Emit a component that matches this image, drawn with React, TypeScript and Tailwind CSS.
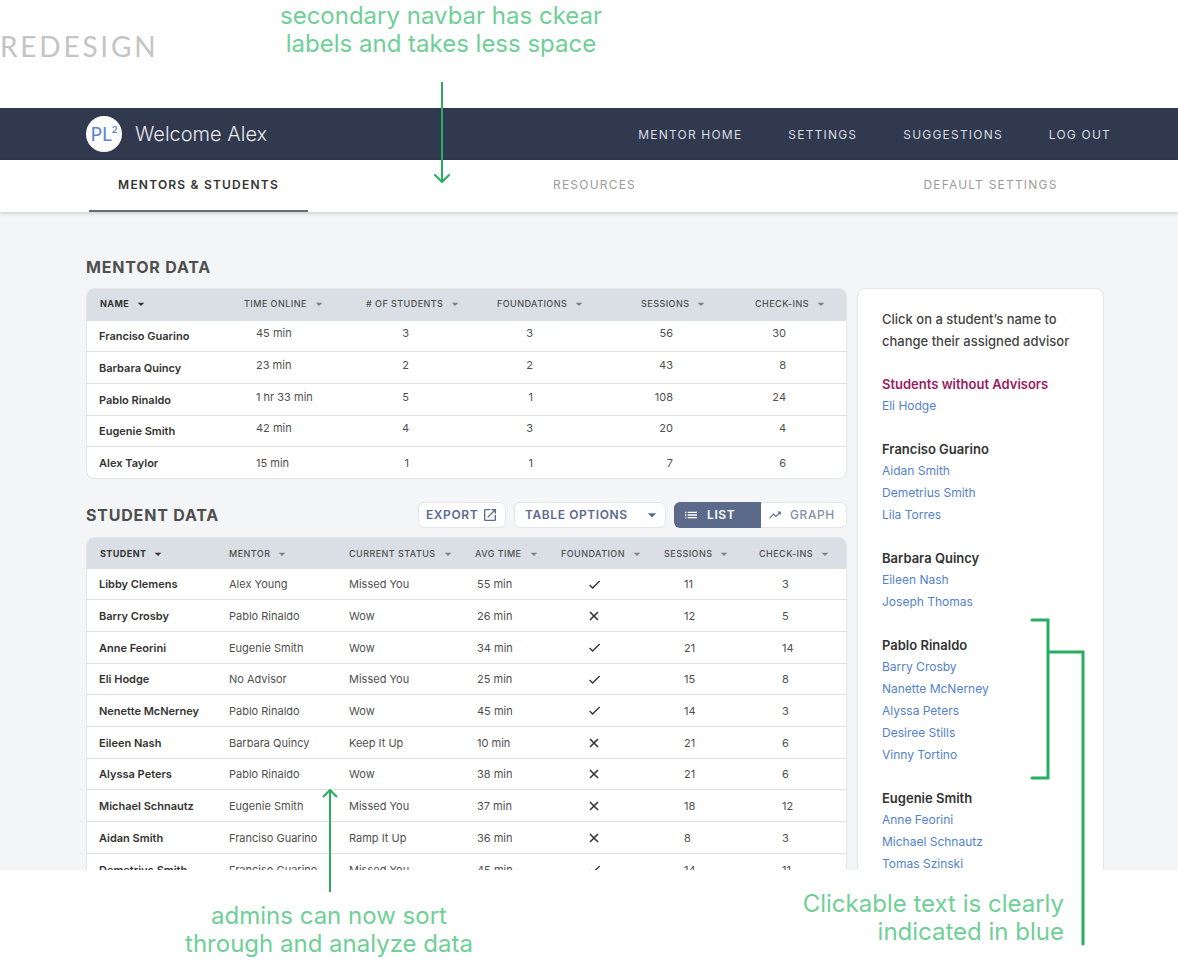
import type { ReactNode } from "react";
import {
  MdArrowDropDown,
  MdCheck,
  MdList,
  MdOpenInNew,
  MdTrendingUp,
} from "react-icons/md";

type Mentor = [string, string, number, number, number, number];
type Student = [string, string, string, string, boolean, number, number];

const navLinks = ["MENTOR HOME", "SETTINGS", "SUGGESTIONS", "LOG OUT"];

const mentors: Mentor[] = [
  ["Franciso Guarino", "45 min", 3, 3, 56, 30],
  ["Barbara Quincy", "23 min", 2, 2, 43, 8],
  ["Pablo Rinaldo", "1 hr 33 min", 5, 1, 108, 24],
  ["Eugenie Smith", "42 min", 4, 3, 20, 4],
  ["Alex Taylor", "15 min", 1, 1, 7, 6],
];

const students: Student[] = [
  ["Libby Clemens", "Alex Young", "Missed You", "55 min", true, 11, 3],
  ["Barry Crosby", "Pablo Rinaldo", "Wow", "26 min", false, 12, 5],
  ["Anne Feorini", "Eugenie Smith", "Wow", "34 min", true, 21, 14],
  ["Eli Hodge", "No Advisor", "Missed You", "25 min", true, 15, 8],
  ["Nenette McNerney", "Pablo Rinaldo", "Wow", "45 min", true, 14, 3],
  ["Eileen Nash", "Barbara Quincy", "Keep It Up", "10 min", false, 21, 6],
  ["Alyssa Peters", "Pablo Rinaldo", "Wow", "38 min", false, 21, 6],
  ["Michael Schnautz", "Eugenie Smith", "Missed You", "37 min", false, 18, 12],
  ["Aidan Smith", "Franciso Guarino", "Ramp It Up", "36 min", false, 8, 3],
  ["Demetrius Smith", "Franciso Guarino", "Missed You", "45 min", true, 14, 11],
];

const advisors = [
  { name: "Students without Advisors", students: ["Eli Hodge"], alert: true },
  { name: "Franciso Guarino", students: ["Aidan Smith", "Demetrius Smith", "Lila Torres"] },
  { name: "Barbara Quincy", students: ["Eileen Nash", "Joseph Thomas"] },
  {
    name: "Pablo Rinaldo",
    students: ["Barry Crosby", "Nanette McNerney", "Alyssa Peters", "Desiree Stills", "Vinny Tortino"],
  },
  { name: "Eugenie Smith", students: ["Anne Feorini", "Michael Schnautz", "Tomas Szinski"] },
];

function CrossIcon() {
  return (
    <svg
      role="img"
      aria-label="Incomplete"
      viewBox="0 0 14 14"
      className="size-[14px]"
      fill="none"
      stroke="currentColor"
      strokeWidth="1.6"
    >
      <path d="M3 3l8 8M11 3l-8 8" />
    </svg>
  );
}

function HeaderCell({ children, active = false }: { children: ReactNode; active?: boolean }) {
  return (
    <th
      scope="col"
      aria-sort={active ? "ascending" : undefined}
      className={active ? "pl-[13px] text-left font-bold text-[#333]" : "text-left font-medium text-[#4f4f4f]"}
    >
      <button type="button" className="flex items-center gap-1 whitespace-nowrap text-[9px] leading-3 tracking-wider">
        {children}
        <MdArrowDropDown aria-hidden className={active ? "size-4 text-[#333]" : "size-4 text-[#828282]"} />
      </button>
    </th>
  );
}

function TableCard({ children }: { children: ReactNode }) {
  return (
    <div className="overflow-hidden rounded-lg border border-[#e3e5e9] bg-white">
      <table className="w-full table-fixed border-separate border-spacing-0 text-[11px] leading-4 text-[#4f4f4f]">
        {children}
      </table>
    </div>
  );
}

const rowClass = "h-8 nth-[3n+1]:h-[31px] last:h-[31px] [&>*]:border-b [&>*]:border-[#e0e0e0] last:[&>*]:border-b-0";
const nameClass = "pl-3 text-left font-semibold whitespace-nowrap text-[#333]";

function MentorTable() {
  return (
    <TableCard>
      <colgroup>
        <col className="w-[157px]" />
        <col className="w-[122px]" />
        <col className="w-[131px]" />
        <col className="w-[144px]" />
        <col className="w-[114px]" />
        <col className="w-[91px]" />
      </colgroup>
      <thead className="bg-[#dadfe6]">
        <tr className="h-8 [&>th]:pb-[2px]">
          <HeaderCell active>NAME</HeaderCell>
          <HeaderCell>TIME ONLINE</HeaderCell>
          <HeaderCell># OF STUDENTS</HeaderCell>
          <HeaderCell>FOUNDATIONS</HeaderCell>
          <HeaderCell>SESSIONS</HeaderCell>
          <HeaderCell>CHECK-INS</HeaderCell>
        </tr>
      </thead>
      <tbody>
        {mentors.map(([name, time, count, foundations, sessions, checkIns]) => (
          <tr key={name} className={`${rowClass} [&>td]:pb-[6px] last:[&>td]:pb-0`}>
            <th scope="row" className={nameClass}>{name}</th>
            <td className="pl-3">{time}</td>
            <td className="pr-[88px] text-right">{count}</td>
            <td className="pr-[108px] text-right">{foundations}</td>
            <td className="pr-[82px] text-right">{sessions}</td>
            <td className="pr-[60px] text-right">{checkIns}</td>
          </tr>
        ))}
      </tbody>
    </TableCard>
  );
}

function StudentTable() {
  return (
    <TableCard>
      <colgroup>
        <col className="w-[142px]" />
        <col className="w-[120px]" />
        <col className="w-[126px]" />
        <col className="w-[86px]" />
        <col className="w-[103px]" />
        <col className="w-[95px]" />
        <col className="w-[87px]" />
      </colgroup>
      <thead className="bg-[#dadfe6]">
        <tr className="h-[31px]">
          <HeaderCell active>STUDENT</HeaderCell>
          <HeaderCell>MENTOR</HeaderCell>
          <HeaderCell>CURRENT STATUS</HeaderCell>
          <HeaderCell>AVG TIME</HeaderCell>
          <HeaderCell>FOUNDATION</HeaderCell>
          <HeaderCell>SESSIONS</HeaderCell>
          <HeaderCell>CHECK-INS</HeaderCell>
        </tr>
      </thead>
      <tbody>
        {students.map(([name, mentor, status, time, done, sessions, checkIns]) => (
          <tr key={name} className={rowClass}>
            <th scope="row" className={nameClass}>{name}</th>
            <td>{mentor}</td>
            <td>{status}</td>
            <td className="pl-[2px]">{time}</td>
            <td className="pl-[26px] text-[#333]">
              {done ? <MdCheck role="img" aria-label="Complete" className="size-[15px]" /> : <CrossIcon />}
            </td>
            <td className="pl-5">{sessions}</td>
            <td className="pl-[23px]">{checkIns}</td>
          </tr>
        ))}
      </tbody>
    </TableCard>
  );
}

function Toolbar() {
  return (
    <div className="flex items-center gap-2 text-[12px] leading-4 font-semibold tracking-wider text-[#5b6a8f]">
      <button
        type="button"
        className="flex h-[26px] w-[88px] items-center justify-between rounded-md border border-[#e3e5ec] bg-white px-[7px]"
      >
        EXPORT
        <MdOpenInNew aria-hidden className="size-4" />
      </button>
      <div className="relative">
        <label htmlFor="table-options" className="absolute size-0 opacity-0" aria-label="Table options" />
        <select
          id="table-options"
          className="block h-[26px] w-[152px] appearance-none rounded-md border border-[#e3e5ec] bg-white py-0 pr-6 pl-[10px] tracking-wider"
        >
          <option>TABLE OPTIONS</option>
        </select>
        <MdArrowDropDown aria-hidden className="pointer-events-none absolute top-[3px] right-1 size-5" />
      </div>
      <div className="flex h-[26px] w-[173px] overflow-hidden rounded-md">
        <button type="button" aria-pressed="true" className="flex w-[87px] items-center gap-2 bg-[#5b6a8a] pl-[9px] text-white">
          <MdList aria-hidden className="size-4" />
          LIST
        </button>
        <button
          type="button"
          aria-pressed="false"
          className="flex flex-1 items-center gap-2 rounded-r-md border border-l-0 border-[#e3e5ec] bg-white pl-[7px] font-medium text-[#8790ab]"
        >
          <MdTrendingUp aria-hidden className="size-[14px] text-[#5b6a8f]" />
          GRAPH
        </button>
      </div>
    </div>
  );
}

function AdvisorPanel() {
  return (
    <aside className="w-[247px] shrink-0 rounded-lg border border-[#e3e5e9] bg-white pt-[19px] pb-8 pl-6 text-[12px] leading-[22px]">
      <p className="text-[13px] font-medium text-[#444]">
        Click on a student’s name to
        <br />
        change their assigned advisor
      </p>
      {advisors.map((group) => (
        <section key={group.name} className="mt-[21px]">
          <h3 className={group.alert ? "text-[13px] font-semibold text-[#9b1b64]" : "text-[13px] font-semibold text-[#333]"}>
            {group.name}
          </h3>
          <ul>
            {group.students.map((name) => (
              <li key={name}>
                <a href="#" className="text-[#5482cd]">{name}</a>
              </li>
            ))}
          </ul>
        </section>
      ))}
    </aside>
  );
}

function Annotations() {
  return (
    <div aria-hidden className="pointer-events-none text-[#27ae60]">
      <svg className="absolute top-[82px] left-[433px]" width="18" height="102" fill="none" stroke="currentColor" strokeWidth="2">
        <path d="M9 0V100M2 93l7 7 7-7" strokeLinejoin="round" strokeLinecap="round" />
      </svg>
      <svg className="absolute top-[788px] left-[321px]" width="18" height="104" fill="none" stroke="currentColor" strokeWidth="2">
        <path d="M9 104V2M2 9l7-7 7 7" strokeLinejoin="round" />
      </svg>
      <svg className="absolute top-[618px] right-[92px]" width="56" height="328" fill="none" stroke="currentColor" strokeWidth="3">
        <path d="M2 2H18V160H2M18 34H53V326" strokeLinecap="round" />
      </svg>
    </div>
  );
}

export default function App() {
  return (
    <div className="relative flex h-screen flex-col overflow-hidden bg-white font-['Inter',sans-serif]">
      <div className="flex h-[108px] shrink-0">
        <h1 className="w-[279px] pt-7 font-['Lato',sans-serif] text-[28px] leading-9 font-normal tracking-widest text-[#c4c4c4]">
          REDESIGN
        </h1>
        <p className="w-[324px] pt-[2px] text-center text-[24px] leading-7 whitespace-nowrap text-[#6fcf97]">
          secondary navbar has ckear
          <br />
          labels and takes less space
        </p>
      </div>

      <div className="flex min-h-0 flex-1 flex-col overflow-hidden bg-[#f4f5f7]">
        <header className="flex h-[52px] shrink-0 items-center justify-between bg-[#31394e] pr-[67px] pl-[86px]">
          <div className="flex items-center gap-[13px]">
            <span className="flex size-9 items-center justify-center rounded-full bg-white font-['Lato',sans-serif] text-[19px] leading-5 font-normal text-[#5b86d0]">
              PL<sup className="text-[10px] leading-3 font-bold">2</sup>
            </span>
            <span className="text-[20px] leading-6 font-light text-[#e6e8ec]">Welcome Alex</span>
          </div>
          <nav aria-label="Main" className="flex gap-[46px] pt-[2px] text-[12px] leading-4 tracking-widest text-[#d9dce3]">
            {navLinks.map((label) => (
              <a key={label} href="#">{label}</a>
            ))}
          </nav>
        </header>

        <nav
          aria-label="Section"
          className="flex h-[52px] shrink-0 justify-between bg-white pr-[78px] pl-[89px] text-[12px] leading-4 tracking-widest text-[#9b9b9b] shadow-[0_1px_4px_rgba(0,0,0,0.2)]"
        >
          <a href="#" aria-current="page" className="flex w-[219px] items-center justify-center border-b-2 border-[#6b6b6b] font-semibold text-[#333]">
            MENTORS &amp; STUDENTS
          </a>
          <a href="#" className="flex w-[219px] items-center justify-center border-b-2 border-transparent">RESOURCES</a>
          <a href="#" className="flex w-[219px] items-center justify-center border-b-2 border-transparent">DEFAULT SETTINGS</a>
        </nav>

        <main className="flex items-start gap-[10px] pt-[76px] pr-[74px] pl-[86px]">
          <div className="-mt-[31px] min-w-0 flex-1">
            <h2 className="mb-[11px] text-[16px] leading-5 font-bold tracking-wider text-[#4f4f4f]">MENTOR DATA</h2>
            <MentorTable />
            <div className="mt-[23px] mb-[9px] flex items-center justify-between">
              <h2 className="text-[16px] leading-5 font-bold tracking-wider text-[#4f4f4f]">STUDENT DATA</h2>
              <Toolbar />
            </div>
            <StudentTable />
          </div>
          <AdvisorPanel />
        </main>
      </div>

      <div className="flex h-24 shrink-0 justify-between pr-[114px] pl-[178px] text-[24px] leading-7 whitespace-nowrap text-[#6fcf97]">
        <p className="w-[302px] pt-8 text-center">
          admins can now sort
          <br />
          through and analyze data
        </p>
        <p className="pt-5 text-right">
          Clickable text is clearly
          <br />
          indicated in blue
        </p>
      </div>

      <Annotations />
    </div>
  );
}
